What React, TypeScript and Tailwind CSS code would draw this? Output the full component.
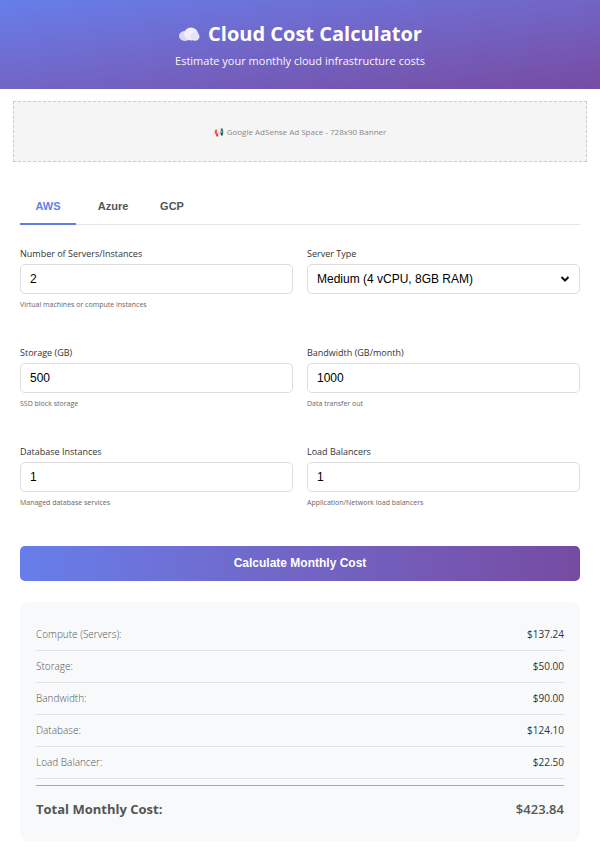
import React from "react";

const f = { fontFamily: '"Open Sans", "Liberation Sans", sans-serif' };
const a = { fontFamily: '"Liberation Sans", Arial, sans-serif' };

function Field({ label, value, help, select }: { label: string; value: string; help?: string; select?: boolean }) {
  return (
    <div className="flex flex-col">
      <div className="text-[9px] text-[#333] mb-[4px] h-[13px]" style={f}>{label}</div>
      <div className="h-[30px] border border-[#ddd] rounded-[5px] bg-white flex items-center justify-between px-[9px] text-[12px] text-black" style={a}>
        <span>{value}</span>
        {select && (
          <svg width="10" height="8" viewBox="0 0 10 8"><path d="M1.5 2 L5 5.5 L8.5 2" fill="none" stroke="#111" strokeWidth="2" /></svg>
        )}
      </div>
      <div className="text-[7px] text-[#666] mt-[6px] h-[10px]" style={f}>{help}</div>
    </div>
  );
}

export default function App() {
  const rows = [
    ["Compute (Servers):", "$137.24"],
    ["Storage:", "$50.00"],
    ["Bandwidth:", "$90.00"],
    ["Database:", "$124.10"],
    ["Load Balancer:", "$22.50"],
  ];
  return (
    <div className="w-[600px] h-[854px] bg-white overflow-hidden" style={f}>
      <div className="h-[89px] bg-gradient-to-br from-[#667eea] to-[#764ba2] flex flex-col items-center pt-[20px] text-white">
        <div className="flex items-center gap-[8px] text-[20px] font-bold leading-[28px]">
          <svg width="22" height="14" viewBox="0 0 22 14">
            <ellipse cx="7" cy="9" rx="6" ry="5" fill="#dcd8f0" />
            <ellipse cx="13" cy="7" rx="7" ry="6.5" fill="#f0eefa" />
            <ellipse cx="17" cy="9.5" rx="4.5" ry="4.3" fill="#e6e2f6" />
          </svg>
          <span>Cloud Cost Calculator</span>
        </div>
        <div className="text-[11px] mt-[5px] opacity-95">Estimate your monthly cloud infrastructure costs</div>
      </div>
      <div className="mx-[13px] mt-[12px] h-[61px] border border-dashed border-[#ccc] bg-[#f5f5f5] flex items-center justify-center text-[8px] text-[#888] gap-[3px]">
        <span className="text-[#d6336c]">📢</span> Google AdSense Ad Space - 728x90 Banner
      </div>
      <div className="px-[20px] pt-[36px]">
        <div className="flex border-b border-[#e5e5e5] text-[11px] font-bold" style={a}>
          <div className="w-[56px] text-center pb-[8px] text-[#667eea] border-b-2 border-[#667eea] -mb-[1px]">AWS</div>
          <div className="w-[74px] text-center pb-[8px] text-[#555]">Azure</div>
          <div className="w-[44px] text-center pb-[8px] text-[#555]">GCP</div>
        </div>
        <div className="grid grid-cols-2 gap-x-[14px] gap-y-[36px] mt-[22px]">
          <Field label="Number of Servers/Instances" value="2" help="Virtual machines or compute instances" />
          <Field label="Server Type" value="Medium (4 vCPU, 8GB RAM)" select />
          <Field label="Storage (GB)" value="500" help="SSD block storage" />
          <Field label="Bandwidth (GB/month)" value="1000" help="Data transfer out" />
          <Field label="Database Instances" value="1" help="Managed database services" />
          <Field label="Load Balancers" value="1" help="Application/Network load balancers" />
        </div>
        <div className="mt-[38px] h-[35px] rounded-[5px] bg-gradient-to-r from-[#667eea] to-[#764ba2] flex items-center justify-center text-white text-[12px] font-bold" style={a}>
          Calculate Monthly Cost
        </div>
        <div className="mt-[21px] h-[239px] rounded-[8px] bg-[#f8f9fa] px-[16px] pt-[17px]">
          {rows.map(([l, v]) => (
            <div key={l} className="h-[32px] flex items-center justify-between border-b border-[#e0e0e0] text-[10px]">
              <span className="text-[#555] font-light">{l}</span>
              <span className="text-[#333]">{v}</span>
            </div>
          ))}
          <div className="mt-[6px] border-t border-[#667eea]/70 h-[50px] flex items-center justify-between text-[#555]">
            <span className="text-[13px] font-bold">Total Monthly Cost:</span>
            <span className="text-[13px] font-semibold">$423.84</span>
          </div>
        </div>
      </div>
    </div>
  );
}
